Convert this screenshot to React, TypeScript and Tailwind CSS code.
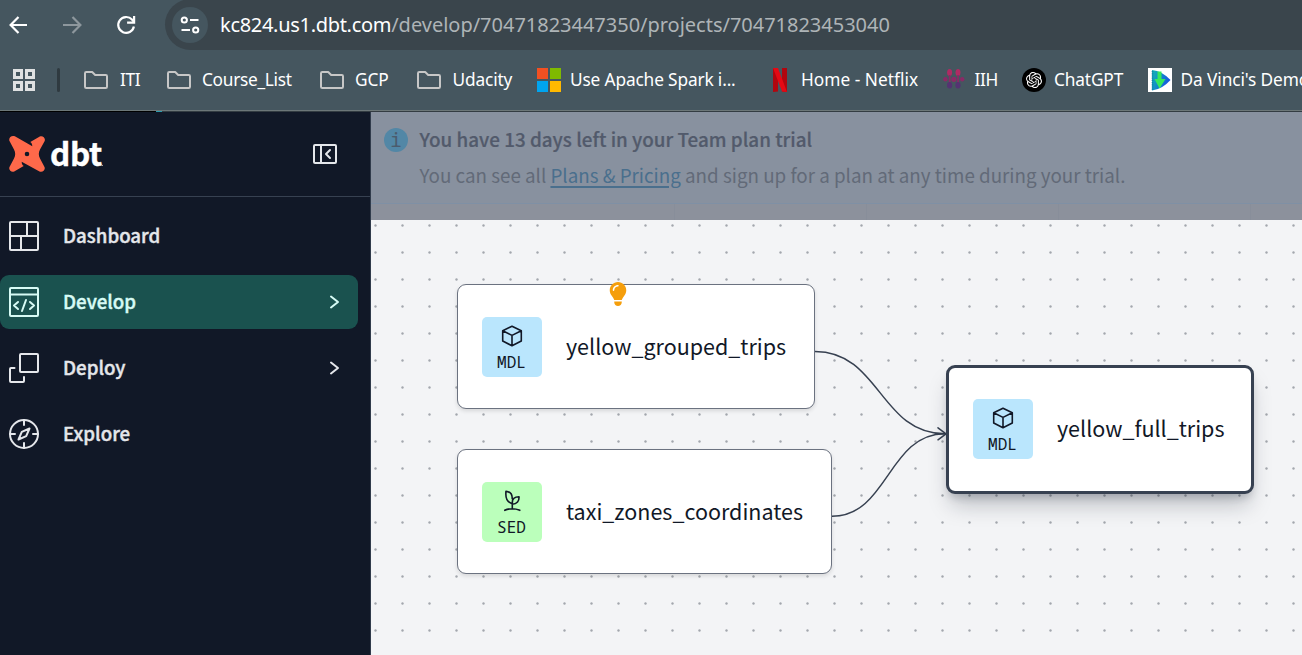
import type { ReactNode } from 'react';
import { SiOpenai } from 'react-icons/si';
import { FaLightbulb } from 'react-icons/fa6';

function FolderIcon() {
  return (
    <svg width="24" height="24" viewBox="0 0 24 24" fill="none" stroke="#c7c7c7" strokeWidth="2" strokeLinejoin="round">
      <path d="M1 5.200 Q1 4 2.300 4 H8.200 L11.200 7 H21.800 Q23 7 23 8.200 V18.800 Q23 20 21.700 20 H2.300 Q1 20 1 18.800 Z" />
    </svg>
  );
}

function MicrosoftIcon() {
  return (
    <span className="grid h-6 w-6 grid-cols-2 gap-[2px]">
      <span className="bg-[#f25022]" />
      <span className="bg-[#7fba00]" />
      <span className="bg-[#00a4ef]" />
      <span className="bg-[#ffb900]" />
    </span>
  );
}

function NetflixIcon() {
  return (
    <svg width="24" height="24" viewBox="0 0 24 24">
      <path d="M5 0h5v23.4L5 24zM14 0h5v24l-5-.6z" fill="#b1060f" />
      <path d="M5 0h5l9 24-5-.6z" fill="#e50914" />
    </svg>
  );
}

function IihIcon() {
  return (
    <svg width="24" height="24" viewBox="0 0 24 24">
      <g fill="#b02a63">
        <ellipse cx="7.6" cy="4.600" rx="2.500" ry="3.500" />
        <ellipse cx="16" cy="4.600" rx="2.500" ry="3.500" />
      </g>
      <g fill="#8a2a66">
        <circle cx="3.400" cy="11.300" r="2.200" />
        <circle cx="11.800" cy="11.300" r="2.600" />
        <circle cx="20.200" cy="11.300" r="2.200" />
        <rect x="6.800" y="7" width="1.700" height="10" />
        <rect x="15.200" y="7" width="1.700" height="10" />
      </g>
      <g fill="#553272">
        <ellipse cx="7.600" cy="17.300" rx="2.600" ry="3.200" />
        <ellipse cx="16" cy="17.300" rx="2.600" ry="3.200" />
      </g>
    </svg>
  );
}

function ChatGptIcon() {
  return (
    <span className="flex h-6 w-6 items-center justify-center rounded-full bg-black text-white">
      <SiOpenai size={16} />
    </span>
  );
}

function DaVinciIcon() {
  return (
    <svg width="24" height="24" viewBox="0 0 24 24">
      <defs>
        <linearGradient id="dv" x1="0" y1="0" x2="1" y2="0.400">
          <stop offset="0" stopColor="#10b9b4" />
          <stop offset="1" stopColor="#1557e0" />
        </linearGradient>
      </defs>
      <rect width="24" height="24" fill="#fff" />
      <path d="M4 2 Q14 3 22.500 12 Q14 21.500 4 22.500 Z" fill="url(#dv)" />
      <path d="M4.500 3v19" stroke="#0f7fa8" strokeWidth="1.600" strokeDasharray="1.200 1" />
      <path d="M9.500 3.500h4v7.500h4L11.500 20.500 6.500 11h3z" fill="#35e85f" />
    </svg>
  );
}

function DbtMark() {
  return (
    <svg width="36" height="36" viewBox="0 0 36 36" className="shrink-0">
      <path
        fill="#ff694a"
        fillRule="evenodd"
        d="M6.300.600 23.300 10.300C23.300 8.500 22.700 7 21.300 6L30.800.500C33.500-.800 36.800 2 35.700 5L31 13.500C29.400 16.500 29.400 19.500 31 22.500L35.500 31C36.800 34 33.500 36.800 30.500 35.500L12.700 25.700C12.700 27.700 13.300 29.200 14.700 30L5.200 35.500C2.500 36.800-.800 34 .500 31L5 22.500C6.600 19.500 6.600 16.500 5 13.500L.500 5C-.800 2 2.500-1.200 6.300.600ZM18 15.700a2.300 2.300 0 1 0 0 4.600 2.300 2.300 0 0 0 0-4.600Z"
      />
    </svg>
  );
}

type Bookmark = { label: string; icon: ReactNode; width: string; text: string };

const bookmarks: Bookmark[] = [
  { label: 'ITI', icon: <FolderIcon />, width: 'w-[83px]', text: 'tracking-[-0.4px]' },
  { label: 'Course_List', icon: <FolderIcon />, width: 'w-[153px]', text: 'tracking-[-0.3px] -ml-px' },
  { label: 'GCP', icon: <FolderIcon />, width: 'w-[97px]', text: 'tracking-[-0.1px] -ml-px' },
  { label: 'Udacity', icon: <FolderIcon />, width: 'w-[120px]', text: 'tracking-[-0.15px] -ml-[0.5px]' },
  { label: 'Use Apache Spark i...', icon: <MicrosoftIcon />, width: 'w-[231px]', text: 'tracking-[-0.15px] -ml-[3px]' },
  { label: 'Home - Netflix', icon: <NetflixIcon />, width: 'w-[174px]', text: 'tracking-[0.02px] -ml-[3px]' },
  { label: 'IIH', icon: <IihIcon />, width: 'w-[80px]', text: 'tracking-[-0.4px] -ml-[3.500px]' },
  { label: 'ChatGPT', icon: <ChatGptIcon />, width: 'w-[126px]', text: 'tracking-[-0.15px] -ml-[4px]' },
  { label: "Da Vinci's Demon", icon: <DaVinciIcon />, width: 'w-[220px]', text: 'tracking-[-0.1px] -ml-[3.500px]' },
];

function BrowserChrome() {
  return (
    <header className="flex h-[112px] flex-col overflow-hidden bg-[#45565f] font-['Noto_Sans',sans-serif]">
      <div className="flex h-[50px] shrink-0">
        <div className="flex w-[165px] shrink-0 items-center pl-[9px]">
          <svg width="20" height="20" viewBox="0 0 20 20" fill="none" stroke="#fff" strokeWidth="2.200">
            <path d="M18 10H2M9.500 2 1.600 10l7.900 8" />
          </svg>
          <svg className="ml-[33px]" width="20" height="20" viewBox="0 0 20 20" fill="none" stroke="#8d979d" strokeWidth="2.200">
            <path d="M1 10h16.500M10.500 2l7.900 8-7.900 8" />
          </svg>
          <svg className="ml-[34px]" width="20" height="20" viewBox="0 0 20 20" fill="none" stroke="#fff" strokeWidth="2.200">
            <path d="M17.900 11.500A7.900 7.900 0 1 1 16 4.600L18 7" />
            <path d="M18.100 1v6.600h-7" />
          </svg>
        </div>
        <div className="-mt-px flex h-[51px] flex-1 items-center rounded-l-[26px] bg-[#3a454c] pl-[7px]">
          <span className="flex h-9 w-9 items-center justify-center rounded-full bg-[#45565f]">
            <svg width="20" height="20" viewBox="0 0 20 20" fill="none" stroke="#fff" strokeWidth="2">
              <circle cx="4.300" cy="5" r="2.600" />
              <path d="M10 5h8.500M1.500 15H10" />
              <circle cx="15.700" cy="15" r="2.600" />
            </svg>
          </span>
          <span className="ml-[12px] whitespace-nowrap text-[20px] leading-[28px] text-[#aeb4b7]">
            <span className="tracking-[-0.3px] text-white">kc824.us1.dbt.com</span>
            <span className="tracking-[-0.015px]">/develop/70471823447350/projects/70471823453040</span>
          </span>
        </div>
      </div>
      <div className="flex h-[60px] shrink-0 items-center">
        <span className="ml-[13px] grid shrink-0 grid-cols-2 gap-[2px]">
          {[0, 1, 2, 3].map((i) => (
            <span key={i} className="h-[10px] w-[10px] border-[3px] border-[#dfe1e2]" />
          ))}
        </span>
        <span className="ml-[22px] h-6 w-[3px] shrink-0 rounded-full bg-[#2f3a40]" />
        <nav className="ml-[24px] flex min-w-0 flex-1 overflow-hidden text-[17.300px] leading-6 text-white">
          {bookmarks.map((b) => (
            <a key={b.label} className={`flex shrink-0 items-center gap-[12px] ${b.width}`}>
              <span className="shrink-0">{b.icon}</span>
              <span className={`whitespace-nowrap ${b.text}`}>{b.label}</span>
            </a>
          ))}
        </nav>
      </div>
      <div className="h-px shrink-0 bg-[#6c7778]" />
      <div className="flex h-px shrink-0 bg-[#333c42]">
        <span className="w-[156px] bg-black" />
        <span className="w-[6px] bg-[#2c9bad]" />
      </div>
    </header>
  );
}

const line = { fill: 'none', stroke: 'currentColor', strokeWidth: 2, strokeLinejoin: 'round' as const, strokeLinecap: 'round' as const };

const navItems = [
  {
    label: 'Dashboard',
    icon: <path d="M2 1h26a1 1 0 0 1 1 1v26a1 1 0 0 1-1 1H2a1 1 0 0 1-1-1V2a1 1 0 0 1 1-1zM1 15h28M18 1v14M12 15v14" />,
  },
  {
    label: 'Develop',
    active: true,
    chevron: true,
    icon: <path d="M2 1h26a1 1 0 0 1 1 1v26a1 1 0 0 1-1 1H2a1 1 0 0 1-1-1V2a1 1 0 0 1 1-1zM1 7.500h28M9 15l-4 3.500 4 3.500M21 15l4 3.500-4 3.500M17 13l-4 11" />,
  },
  {
    label: 'Deploy',
    chevron: true,
    icon: <path d="M12 1h16a1 1 0 0 1 1 1v16a1 1 0 0 1-1 1H12a1 1 0 0 1-1-1V2a1 1 0 0 1 1-1zM5.500 15H2a1 1 0 0 0-1 1v12a1 1 0 0 0 1 1h12a1 1 0 0 0 1-1v-4" />,
  },
  {
    label: 'Explore',
    icon: (
      <>
        <circle cx="15" cy="15" r="14" />
        <path d="M15 1v5M15 24v5M1 15h5M24 15h5M20.500 9.500l-3.300 7.700-7.700 3.300 3.300-7.700z" />
      </>
    ),
  },
];

function Sidebar() {
  return (
    <aside className="flex w-[371px] shrink-0 flex-col border-r border-[#303b4b] bg-[#111827]">
      <div className="flex h-[85px] shrink-0 items-center border-b border-[#374151] pl-[9px] text-white">
        <DbtMark />
        <span className="ml-[5px] pb-[4px] text-[31.500px] font-bold leading-[36px] tracking-[-0.4px] font-['Noto_Sans_CJK_SC',sans-serif] [-webkit-text-stroke:0.4px]">dbt</span>
        <span className="mt-[22px] h-px w-px bg-[#9ca3af]" />
        <svg className="ml-auto mr-[33px] text-[#e5e7eb]" width="24" height="20" viewBox="0 0 24 20" {...line}>
          <path d="M2 1h20a1 1 0 0 1 1 1v16a1 1 0 0 1-1 1H2a1 1 0 0 1-1-1V2a1 1 0 0 1 1-1zM8 1v18M17 6l-4 4 4 4" />
        </svg>
      </div>
      <nav className="flex flex-col gap-3 pr-3 pt-3">
        {navItems.map((n) => (
          <a
            key={n.label}
            className={`flex h-[54px] items-center rounded-[9px] pl-[9px] ${n.active ? 'bg-[#1a524f] text-[#d7fbf5]' : 'text-[#e5e7eb]'}`}
          >
            <svg width="30" height="30" viewBox="0 0 30 30" {...line}>{n.icon}</svg>
            <span className="ml-[24px] pb-[2px] text-[18.700px] font-medium leading-[30px] font-['Noto_Sans_CJK_SC',sans-serif] [-webkit-text-stroke:0.400px]">{n.label}</span>
            {n.chevron && (
              <svg className="ml-auto mr-[18px]" width="11" height="14" viewBox="0 0 11 14" {...line}>
                <path d="M2 1.500 9 7l-7 5.500" />
              </svg>
            )}
          </a>
        ))}
      </nav>
    </aside>
  );
}

function Banner() {
  return (
    <div className="h-[108px] shrink-0 bg-[#8c919c]">
      <div className="flex h-[92px] border-b border-[#7f90a5] bg-[#88919f] pl-[13px] pt-[16px] font-['Noto_Sans_CJK_SC',sans-serif] text-[18.800px] leading-[24px] text-[#626a78]">
        <span className="flex h-6 w-6 shrink-0 items-center justify-center rounded-full bg-[#5287a6] text-[19px] text-[#4b5b6d] font-['Noto_Sans_Mono',monospace]">i</span>
        <div className="-mt-px ml-[11.500px] whitespace-nowrap">
          <p className="text-[18.870px] font-medium text-[#525a6b] [-webkit-text-stroke:0.200px]">You have 13 days left in your Team plan trial</p>
          <p className="mt-[12px]">
            You can see all <a className="text-[#4a6f8d] underline decoration-2 underline-offset-[3px]">Plans &amp; Pricing</a> and sign up for a plan at any time during your trial.
          </p>
        </div>
      </div>
      <div className="flex h-4">
        <span className="w-[304px] border-r border-[#888e9a]" />
        <span className="w-[192px] border-r border-[#888e9a]" />
        <span className="w-[192px] border-r border-[#888e9a]" />
        <span className="w-[192px] border-r border-[#888e9a]" />
      </div>
    </div>
  );
}

function CubeIcon() {
  return (
    <svg width="22" height="22" viewBox="0 0 22 22" fill="none" stroke="#111827" strokeWidth="1.600" strokeLinejoin="round">
      <path d="M11 1.200 20.300 5.700V16L11 20.800 1.700 16V5.700zM1.700 5.700 11 10.400l9.300-4.700M11 10.400v10.400" />
    </svg>
  );
}

function SeedIcon() {
  return (
    <svg width="22" height="22" viewBox="0 0 22 22" fill="none" stroke="#111827" strokeWidth="1.600" strokeLinejoin="round" strokeLinecap="round">
      <path d="M10.600 13.500C6 12 4.300 7.500 5 1.200C9 1.800 11.500 4 11.200 8.800M11.300 19V12.500C11.300 8.800 13.500 6.800 18 6.700C18.300 11 16 14.200 11.300 14.200M3.800 20.300C7 18.300 14 18.200 18.800 20.300" />
    </svg>
  );
}

function Badge({ kind }: { kind: 'MDL' | 'SED' }) {
  return (
    <span className={`flex h-[60px] w-[60px] shrink-0 flex-col items-center rounded-[5px] pt-[8px] ${kind === 'MDL' ? 'bg-[#bae6fd]' : 'bg-[#bbffbb]'}`}>
      {kind === 'MDL' ? <CubeIcon /> : <SeedIcon />}
      <span className="mr-px mt-[5px] text-[16px] leading-[20px] text-[#111827] font-['Noto_Sans_Mono',monospace]">{kind}</span>
    </span>
  );
}

const nodeText = "ml-[24px] pb-[2px] whitespace-nowrap text-[21.500px] leading-[30px] text-[#111827] font-['Noto_Sans_CJK_SC',sans-serif]";
const plainNode = 'absolute left-[86px] flex h-[125px] items-center rounded-[9px] border border-[#6b7280] bg-white pl-[24px] shadow-[0_2px_4px_rgba(0,0,0,0.12)]';

function Canvas() {
  return (
    <section className="relative flex-1 overflow-hidden bg-[#f3f4f6]">
      <svg className="absolute inset-0 h-full w-full">
        <defs>
          <pattern id="dots" width="27" height="27" patternUnits="userSpaceOnUse">
            <circle cx="4.500" cy="5.500" r="1.200" fill="#a3a7ae" />
          </pattern>
        </defs>
        <rect width="100%" height="100%" fill="url(#dots)" />
        <g fill="none" stroke="#374151" strokeWidth="1.500">
          <path d="M444 131.500C509 131.500 509 213.800 574 213.800" />
          <path d="M461 296.300C517 296.300 517 213.800 574 213.800" />
          <path d="M567 207.800l8 6-8 6" strokeLinejoin="round" strokeLinecap="round" />
        </g>
      </svg>
      <div className={`${plainNode} top-[64px] w-[358px]`}>
        <Badge kind="MDL" />
        <span className={nodeText}>yellow_grouped_trips</span>
        <FaLightbulb className="absolute left-[150.500px] top-[-3px] h-6 w-[18px]" color="#f59e0b" />
      </div>
      <div className={`${plainNode} top-[229px] w-[375px]`}>
        <Badge kind="SED" />
        <span className={nodeText}>taxi_zones_coordinates</span>
      </div>
      <div className="absolute left-[575px] top-[145px] flex h-[129px] w-[308px] items-center rounded-[9px] border-[3px] border-[#374151] bg-white pb-[2px] pl-[24px] shadow-[0_15px_22px_-5px_rgba(17,24,39,0.25),0_6px_9px_-3px_rgba(17,24,39,0.2)]">
        <Badge kind="MDL" />
        <span className={nodeText}>yellow_full_trips</span>
      </div>
    </section>
  );
}

export default function App() {
  return (
    <div className="flex h-[655px] w-[1302px] flex-col overflow-hidden">
      <BrowserChrome />
      <div className="flex min-h-0 flex-1">
        <Sidebar />
        <main className="flex min-w-0 flex-1 flex-col">
          <Banner />
          <Canvas />
        </main>
      </div>
    </div>
  );
}
